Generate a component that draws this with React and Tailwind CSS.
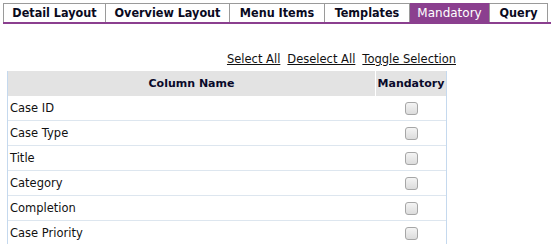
import { useState } from "react";

const tabs = ["Detail Layout", "Overview Layout", "Menu Items", "Templates", "Mandatory", "Query"];
const tabWidths = ["w-[103px]", "w-[124px]", "w-[95px]", "w-[85px]", "w-[80px]", "w-[58px]"];

const columns = ["Case ID", "Case Type", "Title", "Category", "Completion", "Case Priority"];

function Checkbox({ checked, onChange }) {
  return (
    <button
      type="button"
      onClick={onChange}
      className="w-[13px] h-[13px] rounded-[3px] border border-[#a6a6a6] bg-gradient-to-b from-[#f4f4f4] to-[#dcdcdc] flex items-center justify-center"
    >
      {checked && (
        <svg viewBox="0 0 10 10" className="w-[9px] h-[9px]">
          <path d="M1.5 5l2.5 2.5 4.5-5" fill="none" stroke="#333" strokeWidth="1.6" />
        </svg>
      )}
    </button>
  );
}

export default function App() {
  const [active, setActive] = useState("Mandatory");
  const [checked, setChecked] = useState(columns.map(() => false));

  return (
    <div className="w-[551px] h-[244px] overflow-hidden bg-white font-['DejaVu_Sans',Verdana,sans-serif] text-[#111]">
      {/* tab strip */}
      <div className="pt-[3px] pl-[3px]">
        <div className="flex border-b-[2px] border-[#8b3f8f] w-[548px]">
          {tabs.map((tab, i) => (
            <div
              key={tab}
              onClick={() => setActive(tab)}
              className={`${tabWidths[i]} h-[19px] flex items-center justify-center leading-none border-t border-[#9a9a9a] ${
                i === 0 ? "border-l" : ""
              } border-r ${
                active === tab
                  ? "bg-[#8b3f8f] text-white font-normal text-[12px] border-t-[#8b3f8f]"
                  : "bg-white font-bold text-[12.5px] font-['DejaVu_Sans_Condensed','DejaVu_Sans',sans-serif] text-[#0a0a1e]"
              }`}
            >
              {tab}
            </div>
          ))}
        </div>
      </div>

      {/* selection links */}
      <div className="w-[456px] flex justify-end gap-[7px] mt-[27px] text-[11.5px] text-[#111]">
        <a className="underline cursor-pointer" onClick={() => setChecked(columns.map(() => true))}>Select All</a>
        <a className="underline cursor-pointer" onClick={() => setChecked(columns.map(() => false))}>Deselect All</a>
        <a className="underline cursor-pointer" onClick={() => setChecked((c) => c.map((v) => !v))}>Toggle Selection</a>
      </div>

      {/* table */}
      <div className="ml-[7px] mt-[3px] w-[440px] border-l border-r border-[#c5d9ee]">
        <div className="flex h-[25px] bg-[#e3e3e3] text-[11px] font-bold text-[#0a0a2a]">
          <div className="w-[368px] flex items-center justify-center border-r border-white">Column Name</div>
          <div className="flex-1 flex items-center justify-center">Mandatory</div>
        </div>
        {columns.map((col, i) => (
          <div key={col} className="flex h-[25px] border-b border-[#dde6ef] text-[11.5px]">
            <div className="w-[368px] flex items-center pl-[2px]">{col}</div>
            <div className="flex-1 flex items-center justify-center">
              <Checkbox
                checked={checked[i]}
                onChange={() => setChecked((c) => c.map((v, j) => (j === i ? !v : v)))}
              />
            </div>
          </div>
        ))}
      </div>
    </div>
  );
}
